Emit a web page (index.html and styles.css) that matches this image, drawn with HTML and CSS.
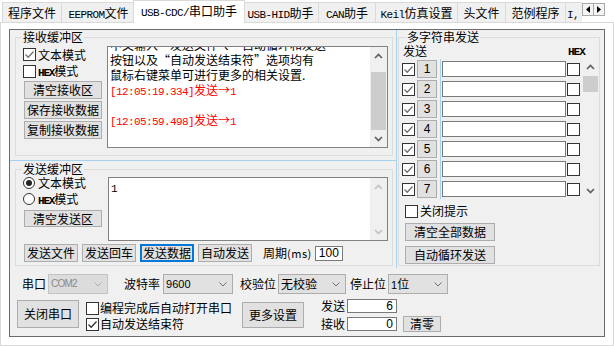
FILE: index.html
```html
<!DOCTYPE html>
<html lang="zh-CN">
<head>
<meta charset="utf-8">
<title>USB-CDC/串口助手</title>
<link rel="stylesheet" href="styles.css">
</head>
<body>
<div class="tabs">
  <div class="tab w1">程序文件</div>
  <div class="tab w2"><span class="m">EEPROM</span>文件</div>
  <div class="tab w3 active"><span class="m">USB-CDC/</span>串口助手</div>
  <div class="tab w4"><span class="m">USB-HID</span>助手</div>
  <div class="tab w5"><span class="m">CAN</span>助手</div>
  <div class="tab w6"><span class="m">Keil</span>仿真设置</div>
  <div class="tab w7">头文件</div>
  <div class="tab w8">范例程序</div>
  <div class="tab w9"><span class="m">I,</span></div>
  <div class="tabnav">
    <span class="navbtn"><svg width="4" height="7" viewBox="0 0 4 7"><path d="M4 0V7L0 3.5Z" fill="#000"/></svg></span>
    <span class="navbtn"><svg width="4" height="7" viewBox="0 0 4 7"><path d="M0 0V7L4 3.5Z" fill="#000"/></svg></span>
  </div>
</div>

<div class="page">
  <div class="panel">
    <div class="top">
      <div class="left">
        <fieldset class="group recv">
          <legend>接收缓冲区</legend>
          <div class="inner">
            <div class="lcol">
              <div class="chk"><span class="cb"><svg width="11" height="11" viewBox="0 0 11 11"><path d="M1.5 5.5L4.2 8.2L9.5 2.5" class="ck"/></svg></span><span>文本模式</span></div>
              <div class="chk"><span class="cb"></span><span><span class="hx">HEX</span>模式</span></div>
              <div class="btn lbtn first">清空接收区</div>
              <div class="btn lbtn">保存接收数据</div>
              <div class="btn lbtn">复制接收数据</div>
            </div>
            <div class="tbox recvbox">
              <div class="text">
                <div class="ln partial">中文输入“发送文件”、“自动循环和发送</div>
                <div class="ln">按钮以及“自动发送结束符”选项均有</div>
                <div class="ln">鼠标右键菜单可进行更多的相关设置.</div>
                <div class="ln red"><span class="m">[12:05:19.334]</span>发送→<span class="m">1</span></div>
                <div class="ln">&nbsp;</div>
                <div class="ln red"><span class="m">[12:05:59.498]</span>发送→<span class="m">1</span></div>
              </div>
              <div class="sb">
                <div class="arr"><svg width="9" height="6" viewBox="0 0 9 6"><path d="M1 5L4.5 1.5L8 5" class="ch"/></svg></div>
                <div class="track"><div class="thumb"></div></div>
                <div class="arr"><svg width="9" height="6" viewBox="0 0 9 6"><path d="M1 1L4.5 4.5L8 1" class="ch"/></svg></div>
              </div>
            </div>
          </div>
        </fieldset>
        <div class="hsplit"></div>
        <fieldset class="group send">
          <legend>发送缓冲区</legend>
          <div class="inner">
            <div class="srow">
              <div class="lcol2">
                <div class="rad"><span class="rb on"></span><span>文本模式</span></div>
                <div class="rad"><span class="rb"></span><span><span class="hx">HEX</span>模式</span></div>
                <div class="btn lbtn2">清空发送区</div>
              </div>
              <div class="tbox sendbox">
                <div class="text"><div class="ln first1"><span class="m">1</span></div></div>
                <div class="sb dis">
                  <div class="arr"><svg width="9" height="6" viewBox="0 0 9 6"><path d="M1 5L4.5 1.5L8 5" class="ch"/></svg></div>
                  <div class="track"></div>
                  <div class="arr"><svg width="9" height="6" viewBox="0 0 9 6"><path d="M1 1L4.5 4.5L8 1" class="ch"/></svg></div>
                </div>
              </div>
            </div>
            <div class="brow">
              <div class="btn sbtn">发送文件</div>
              <div class="btn sbtn">发送回车</div>
              <div class="btn sbtn focus">发送数据</div>
              <div class="btn sbtn">自动发送</div>
              <span class="period">周期<span class="ms">(ms)</span></span>
              <div class="inp pinp">100</div>
            </div>
          </div>
        </fieldset>
      </div>
      <div class="vsplit"></div>
      <div class="right">
        <fieldset class="group multi">
          <legend>多字符串发送</legend>
          <div class="inner">
            <div class="mhead"><span>发送</span><span class="hexlbl">HEX</span></div>
            <div class="rows">
              <div class="rl">
                <div class="row"><span class="cb"><svg width="11" height="11" viewBox="0 0 11 11"><path d="M1.5 5.5L4.2 8.2L9.5 2.5" class="ck"/></svg></span><span class="btn nbtn">1</span></div>
                <div class="row"><span class="cb"><svg width="11" height="11" viewBox="0 0 11 11"><path d="M1.5 5.5L4.2 8.2L9.5 2.5" class="ck"/></svg></span><span class="btn nbtn">2</span></div>
                <div class="row"><span class="cb"><svg width="11" height="11" viewBox="0 0 11 11"><path d="M1.5 5.5L4.2 8.2L9.5 2.5" class="ck"/></svg></span><span class="btn nbtn">3</span></div>
                <div class="row"><span class="cb"><svg width="11" height="11" viewBox="0 0 11 11"><path d="M1.5 5.5L4.2 8.2L9.5 2.5" class="ck"/></svg></span><span class="btn nbtn">4</span></div>
                <div class="row"><span class="cb"><svg width="11" height="11" viewBox="0 0 11 11"><path d="M1.5 5.5L4.2 8.2L9.5 2.5" class="ck"/></svg></span><span class="btn nbtn">5</span></div>
                <div class="row"><span class="cb"><svg width="11" height="11" viewBox="0 0 11 11"><path d="M1.5 5.5L4.2 8.2L9.5 2.5" class="ck"/></svg></span><span class="btn nbtn">6</span></div>
                <div class="row"><span class="cb"><svg width="11" height="11" viewBox="0 0 11 11"><path d="M1.5 5.5L4.2 8.2L9.5 2.5" class="ck"/></svg></span><span class="btn nbtn">7</span></div>
              </div>
              <div class="rr">
                <div class="row"><span class="inp minp"></span><span class="cb hcb"></span></div>
                <div class="row"><span class="inp minp"></span><span class="cb hcb"></span></div>
                <div class="row"><span class="inp minp"></span><span class="cb hcb"></span></div>
                <div class="row"><span class="inp minp"></span><span class="cb hcb"></span></div>
                <div class="row"><span class="inp minp"></span><span class="cb hcb"></span></div>
                <div class="row"><span class="inp minp"></span><span class="cb hcb"></span></div>
                <div class="row"><span class="inp minp"></span><span class="cb hcb"></span></div>
              </div>
              <div class="msb">
                <div class="marr"><svg width="9" height="6" viewBox="0 0 9 6"><path d="M1 5L4.5 1.5L8 5" class="ch"/></svg></div>
                <div class="mtrack"><div class="mthumb"></div></div>
                <div class="marr"><svg width="9" height="6" viewBox="0 0 9 6"><path d="M1 1L4.5 4.5L8 1" class="ch"/></svg></div>
              </div>
            </div>
            <div class="chk hint"><span class="cb"></span><span>关闭提示</span></div>
            <div class="btn mbtn first">清空全部数据</div>
            <div class="btn mbtn second">自动循环发送</div>
          </div>
        </fieldset>
      </div>
    </div>

    <div class="bottom">
      <div class="brow1">
        <span class="lb">串口</span>
        <div class="sel disabled s1"><span class="seltxt">COM2</span><svg width="8" height="5" viewBox="0 0 8 5"><path d="M0.5 0.5L4 4L7.5 0.5" class="dv"/></svg></div>
        <span class="lb l2">波特率</span>
        <div class="sel s2"><span class="seltxt">9600</span><svg width="8" height="5" viewBox="0 0 8 5"><path d="M0.5 0.5L4 4L7.5 0.5" class="dv"/></svg></div>
        <span class="lb l3">校验位</span>
        <div class="sel s3"><span>无校验</span><svg width="8" height="5" viewBox="0 0 8 5"><path d="M0.5 0.5L4 4L7.5 0.5" class="dv"/></svg></div>
        <span class="lb l4">停止位</span>
        <div class="sel s4"><span><span class="seltxt">1</span>位</span><svg width="8" height="5" viewBox="0 0 8 5"><path d="M0.5 0.5L4 4L7.5 0.5" class="dv"/></svg></div>
      </div>
      <div class="brow2">
        <div class="btn closebtn">关闭串口</div>
        <div class="opts">
          <div class="chk2"><span class="cb"></span><span>编程完成后自动打开串口</span></div>
          <div class="chk2"><span class="cb"><svg width="11" height="11" viewBox="0 0 11 11"><path d="M1.5 5.5L4.2 8.2L9.5 2.5" class="ck dark"/></svg></span><span>自动发送结束符</span></div>
        </div>
        <div class="btn morebtn">更多设置</div>
        <div class="counts">
          <div class="crow"><span class="lb">发送</span><span class="inp cinp">6</span></div>
          <div class="crow c2"><span class="lb">接收</span><span class="inp cinp">0</span><span class="btn clr">清零</span></div>
        </div>
      </div>
    </div>
  </div>
</div>
</body>
</html>
```

FILE: styles.css
```css
* { box-sizing: border-box; }
html, body { margin: 0; padding: 0; }
body {
  width: 614px; height: 346px; overflow: hidden;
  background: #fff; color: #000;
  font-family: "Noto Sans CJK SC", sans-serif;
  font-size: 12px; line-height: 14px;
}
.m { font-family: "Liberation Mono", monospace; font-size: 11px; letter-spacing: -0.6px; }
.hx { font-family: "Liberation Mono", monospace; font-size: 11px; font-weight: bold; letter-spacing: -1.2px; }

/* tabs */
.tabs { position: relative; display: flex; align-items: flex-end; height: 22px; padding-left: 2px; }
.tab {
  height: 20px; line-height: 19px; text-align: center; white-space: nowrap; overflow: hidden;
  background: #f0f0f0; border: 1px solid #d9d9d9; border-bottom: none; margin-left: -1px; flex: none;
}
.tab.w1 { margin-left: 0; width: 60px; }
.tab.w2 { width: 75px; }
.tab.w3 { width: 108px; }
.tab.w4 { width: 77px; }
.tab.w5 { width: 58px; }
.tab.w6 { width: 83px; }
.tab.w7 { width: 49px; }
.tab.w8 { width: 61px; }
.tab.w9 { width: 17px; border-right: none; text-align: left; padding-left: 1px; }
.tab.active {
  width: 112px; height: 23px; margin-bottom: -1px; margin-left: -3px; margin-right: -2px;
  background: #fff; position: relative; z-index: 1; line-height: 19px;
}
.tabnav { position: absolute; left: 582px; top: 3px; display: flex; }
.navbtn {
  width: 12px; height: 13px; margin-right: -1px; display: flex; align-items: center; justify-content: center;
  background: #f4f4f4; border: 1px solid #a9a9a9;
}

/* page */
.page { height: 324px; border: 1px solid #d9d9d9; padding: 6px 0 0 8px; background: #fff; }
.panel { width: 596px; height: 308px; border: 1px solid #6b6b6b; background: #f0f0f0; }
.top { display: flex; height: 238px; }
.left { width: 386px; flex: none; }
.vsplit { width: 1px; background: #a6d2f2; flex: none; }
.right { width: 207px; flex: none; }
.hsplit { height: 1px; margin-top: 4px; background: #a6d2f2; }

.group { margin: 0; padding: 0; border: 1px solid #dcdcdc; min-width: 0; }
.group > legend { padding: 0 1px; line-height: 14px; height: 14px; }

/* common controls */
.btn {
  display: flex; align-items: center; justify-content: center; white-space: nowrap;
  background: #e1e1e1; border: 1px solid #adadad; flex: none;
}
.btn.focus { border: 2px solid #0078d7; }
.cb { width: 13px; height: 13px; border: 1px solid #333; background: #fff; flex: none; display: flex; align-items: center; justify-content: center; }
.ck { fill: none; stroke: #707070; stroke-width: 1.3; }
.ck.dark { stroke: #333; }
.rb {
  width: 12px; height: 12px; border: 1px solid #333; border-radius: 50%; background: #fff; flex: none;
  display: flex; align-items: center; justify-content: center;
}
.rb.on::after { content: ""; width: 6px; height: 6px; border-radius: 50%; background: #222; }
.inp { background: #fff; border: 1px solid #7a7a7a; flex: none; }
.ch { fill: none; stroke: #606060; stroke-width: 1.7; }
.dis .ch { stroke: #c2c2c2; }
.dv { fill: none; stroke: #707070; stroke-width: 1; }

/* receive group */
.recv { margin-left: 5px; width: 378px; }
.recv > legend { margin-left: 6px; }
.recv .inner { display: flex; padding: 2px 4px 7px 7px; }
.lcol { width: 84px; flex: none; }
.chk { display: flex; align-items: center; height: 17px; gap: 2px; white-space: nowrap; }
.lbtn { width: 78px; height: 18px; margin: 2px 0 0 1px; }
.lbtn.first { margin-top: 1px; }

.tbox { display: flex; border: 1px solid #828282; background: #fff; flex: none; }
.recvbox { width: 281px; height: 102px; }
.text { flex: 1; overflow: hidden; padding-left: 2px; line-height: 15px; }
.ln { white-space: nowrap; height: 15px; }
.ln.partial { margin-top: -10px; }
.red { color: #f00; }
.sb { width: 17px; background: #f0f0f0; display: flex; flex-direction: column; flex: none; }
.arr { height: 17px; display: flex; align-items: center; justify-content: center; flex: none; }
.track { flex: 1; display: flex; flex-direction: column; }
.thumb { flex: 1; margin: 8px 1px 0 1px; background: #cdcdcd; }

/* send group */
.send { margin: 1px 0 0 5px; width: 378px; }
.send > legend { margin-left: 6px; }
.send .inner { padding: 0 4px 3px 7px; }
.srow { display: flex; }
.lcol2 { width: 85px; flex: none; }
.rad { display: flex; align-items: flex-start; height: 16px; gap: 3px; white-space: nowrap; }
.rad .rb { margin-top: 1px; }
.rad > span:last-child { line-height: 14px; }
.lbtn2 { width: 78px; height: 17px; margin: 2px 0 0 1px; }
.sendbox { width: 280px; height: 64px; margin-top: 1px; }
.sendbox .text { line-height: 14px; padding-top: 2px; }
.brow { display: flex; align-items: center; margin-top: 3px; height: 18px; }
.sbtn { width: 54px; height: 18px; margin-left: 4px; }
.sbtn:first-child { margin-left: 1px; }
.period { margin-left: 11px; white-space: nowrap; }
.ms { font-size: 11px; letter-spacing: 0.5px; }
.pinp { width: 28px; height: 15px; margin-left: 3px; font-family: "Liberation Sans", sans-serif; font-size: 12px; line-height: 13px; text-align: center; }

/* multi-string group */
.multi { margin-left: 1px; width: 202px; }
.multi > legend { margin-left: 7px; }
.multi .inner { padding: 0 0 1px 0; }
.mhead { height: 15px; display: flex; justify-content: space-between; padding: 0 14px 0 4px; }
.hexlbl { font-family: "Liberation Mono", monospace; font-size: 11px; font-weight: bold; letter-spacing: -0.9px; line-height: 17px; }
.rows { display: flex; height: 140px; }
.rl { width: 42px; padding-left: 3px; border-right: 1px solid #a6d2f2; flex: none; }
.rr { width: 139px; flex: none; }
.row { height: 20px; display: flex; align-items: center; }
.rl .cb { margin-right: 2px; }
.nbtn { width: 20px; height: 18px; font-family: "Liberation Sans", sans-serif; font-size: 12px; }
.minp { width: 124px; height: 16px; margin-left: 1px; }
.hcb { margin-left: 1px; }
.msb { width: 15px; margin-left: 3px; display: flex; flex-direction: column; flex: none; }
.marr { height: 16px; display: flex; align-items: center; justify-content: center; flex: none; }
.mtrack { flex: 1; }
.mthumb { height: 16px; margin-top: 1px; background: #cdcdcd; }
.hint { margin-top: 4px; height: 16px; padding-left: 6px; }
.mbtn { width: 90px; height: 18px; margin: 4px 0 0 6px; }
.mbtn.second { margin-top: 5px; }

/* bottom */
.bottom { padding: 6px 0 0 7px; }
.brow1 { display: flex; align-items: center; height: 20px; padding-left: 5px; }
.lb { white-space: nowrap; flex: none; }
.sel {
  display: flex; align-items: center; justify-content: space-between; height: 20px; flex: none;
  background: #e1e1e1; border: 1px solid #adadad; padding: 0 5px 0 2px; white-space: nowrap;
}
.sel.disabled { background: #dcdcdc; border-color: #c3c3c3; color: #8a8a8a; }
.sel.disabled .dv { stroke: #b0b0b0; }
.seltxt { font-family: "Liberation Sans", sans-serif; font-size: 11px; }
.disabled .seltxt { font-size: 10px; letter-spacing: -0.8px; }
.s1 { width: 60px; margin-left: 2px; }
.l2 { margin-left: 16px; }
.s2 { width: 70px; margin-left: 3px; }
.l3 { margin-left: 7px; }
.s3 { width: 68px; margin-left: 2px; }
.l4 { margin-left: 4px; }
.s4 { width: 60px; margin-left: 2px; }

.brow2 { display: flex; align-items: flex-start; margin-top: 5px; }
.closebtn { width: 62px; height: 28px; margin-top: 1px; }
.opts { width: 146px; margin-left: 7px; margin-top: 1px; flex: none; }
.chk2 { display: flex; align-items: center; height: 16px; gap: 1px; white-space: nowrap; }
.morebtn { width: 62px; height: 26px; margin: 3px 0 0 10px; }
.counts { margin-left: 17px; }
.crow { display: flex; align-items: center; height: 14px; }
.crow.c2 { height: 16px; margin-top: 3px; }
.cinp {
  width: 50px; height: 14px; margin-left: 2px; text-align: right; padding-right: 3px;
  font-family: "Liberation Sans", sans-serif; font-size: 12px; line-height: 12px;
}
.clr { width: 38px; height: 16px; margin-left: 6px; }
```
